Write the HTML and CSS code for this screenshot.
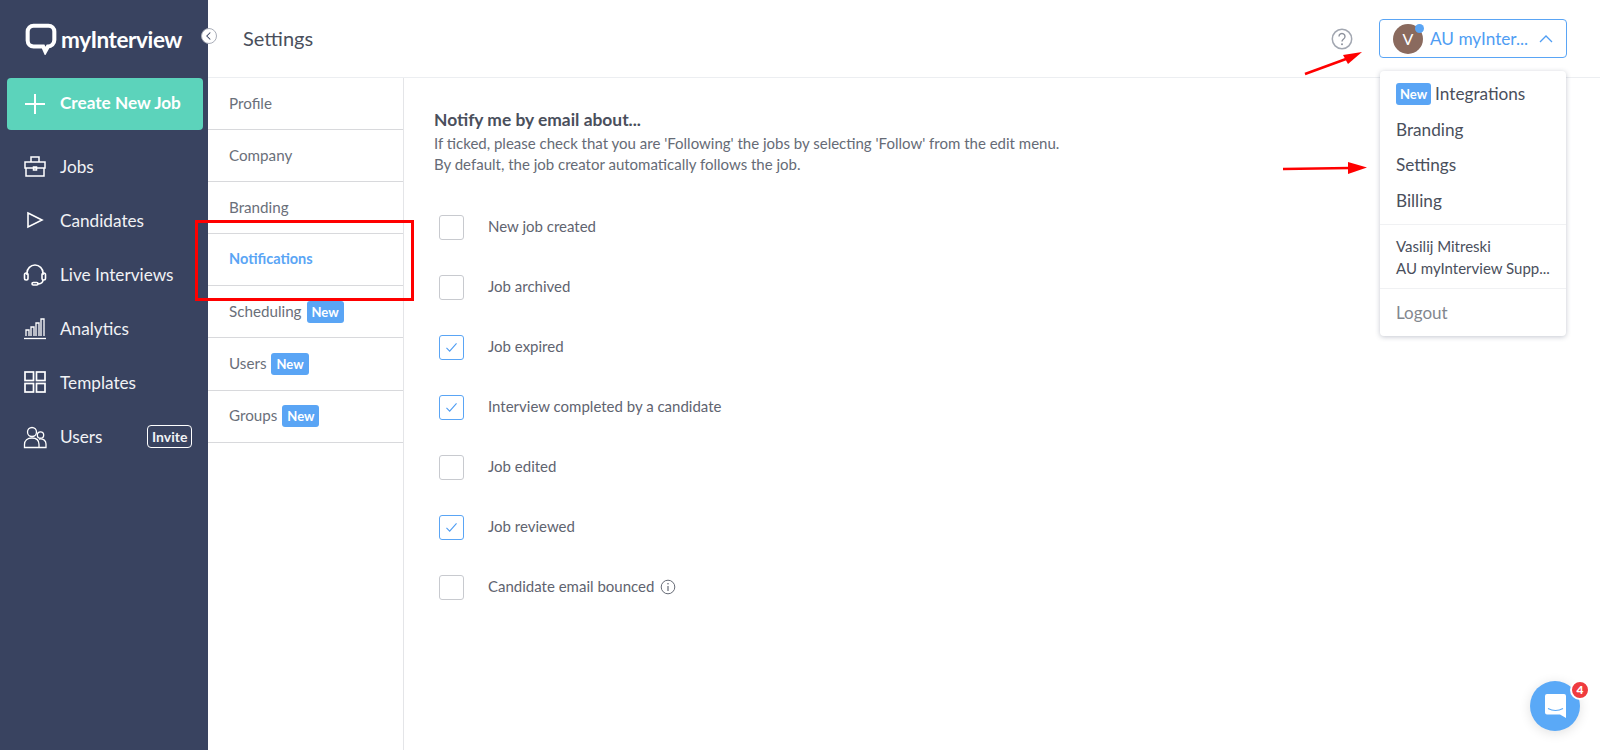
FILE: index.html
```html
<!DOCTYPE html>
<html lang="en">
<head>
    <meta charset="UTF-8">
    <meta name="viewport" content="width=device-width, initial-scale=1.0">
    <link rel="stylesheet" href="styles.css">
    <title>Settings</title>
</head>
<body>
    <div id="app">
        <aside class="sidebar">
            <div class="logo">
                <svg class="logo-mark" viewBox="0 0 30 30" fill="none">
                    <path d="M8 2.5h14a5.5 5.5 0 0 1 5.5 5.5v8a6 6 0 0 1-6 6l-2.5 4.5-2-4.5H8A5.5 5.5 0 0 1 2.5 16.5V8A5.5 5.5 0 0 1 8 2.5z" stroke="#fff" stroke-width="3.8"/>
                </svg>
                <span>myInterview</span>
            </div>
            <span class="collapse">
                <svg viewBox="0 0 16 16" fill="none"><path d="M9.5 4 5.5 8l4 4" stroke="#394360" stroke-width="1.2"/></svg>
            </span>
            <a class="create">
                <svg viewBox="0 0 22 22" fill="none"><path d="M11 1v20M1 11h20" stroke="#fff" stroke-width="2"/></svg>
                <span>Create New Job</span>
            </a>
            <ul class="nav">
                <li>
                    <svg viewBox="0 0 24 24" fill="none" stroke="#fff" stroke-width="1.5"><path d="M2 8h20v6H2zM3 14v8h18v-8M8 8V3h8v5M10.5 13h3v3h-3z"/></svg>
                    Jobs
                </li>
                <li>
                    <svg viewBox="0 0 24 24" fill="none" stroke="#fff" stroke-width="1.6"><path d="M5 5l14 7-14 7z"/></svg>
                    Candidates
                </li>
                <li>
                    <svg viewBox="0 0 24 24" fill="none" stroke="#fff" stroke-width="1.6"><path d="M4 13v-2a8 8 0 0 1 16 0v2"/><rect x="1.5" y="11" width="3.5" height="7" rx="1.7"/><rect x="19" y="11" width="3.5" height="7" rx="1.7"/><path d="M20 18c0 3-3 4-6 4"/><rect x="9" y="20.5" width="6" height="2.5" rx="1.2"/></svg>
                    Live Interviews
                </li>
                <li>
                    <svg viewBox="0 0 24 24" fill="none" stroke="#fff" stroke-width="1.3"><path d="M1 22.5h22"/><path d="M3 20v-6h3v6M8 20v-9h3v9M13 20V7h3v13M18 20V3h3v17"/></svg>
                    Analytics
                </li>
                <li>
                    <svg viewBox="0 0 24 24" fill="none" stroke="#fff" stroke-width="1.7"><rect x="2" y="2" width="8.5" height="8.5"/><rect x="13.5" y="2" width="8.5" height="8.5"/><rect x="2" y="13.5" width="8.5" height="8.5"/><rect x="13.5" y="13.5" width="8.5" height="8.5"/></svg>
                    Templates
                </li>
                <li>
                    <svg viewBox="0 0 24 24" fill="none" stroke="#fff" stroke-width="1.3"><circle cx="9" cy="7" r="4.5"/><circle cx="17.5" cy="10" r="3.2"/><path d="M1.5 22.5v-3c0-4 3-6.5 7.5-6.5s7 2.5 7 6.5v3zM16 14c4-.8 7 1.5 7 5v3.5h-7"/></svg>
                    Users
                    <span class="invite">Invite</span>
                </li>
            </ul>
        </aside>

        <div class="main">
            <header class="topbar">
                <h1>Settings</h1>
                <svg class="help" viewBox="0 0 22 22" fill="none">
                    <circle cx="11" cy="11" r="9.7" stroke="#a2a7b1" stroke-width="1.5"/>
                    <path d="M8 8.5a3 3 0 1 1 4.6 2.5c-1 .7-1.6 1.2-1.6 2.5" stroke="#8d929d" stroke-width="1.4"/>
                    <circle cx="11" cy="16.2" r="1" fill="#8d929d"/>
                </svg>
                <div class="account">
                    <span class="avatar">V</span>
                    <span class="account-name">AU myInter...</span>
                    <svg viewBox="0 0 14 8" fill="none"><path d="M1 7l6-6 6 6" stroke="#4f9df3" stroke-width="1.3"/></svg>
                </div>
            </header>
            <div class="body">
                <ul class="subnav">
                    <li><span>Profile</span></li>
                    <li><span>Company</span></li>
                    <li><span>Branding</span></li>
                    <li class="active"><span>Notifications</span></li>
                    <li><span>Scheduling</span> <b class="tag">New</b></li>
                    <li><span>Users</span> <b class="tag">New</b></li>
                    <li><span>Groups</span> <b class="tag">New</b></li>
                </ul>
                <section class="content">
                    <h2>Notify me by email about...</h2>
                    <p>If ticked, please check that you are 'Following' the jobs by selecting 'Follow' from the edit menu.<br>By default, the job creator automatically follows the job.</p>
                    <ul class="options">
                        <li><span class="check"></span>New job created</li>
                        <li><span class="check"></span>Job archived</li>
                        <li>
                            <span class="check on"><svg viewBox="0 0 14 12" fill="none"><path d="M1.5 6.5 5 10l7.5-8.5" stroke="#4f9df3" stroke-width="1.2"/></svg></span>
                            Job expired
                        </li>
                        <li>
                            <span class="check on"><svg viewBox="0 0 14 12" fill="none"><path d="M1.5 6.5 5 10l7.5-8.5" stroke="#4f9df3" stroke-width="1.2"/></svg></span>
                            Interview completed by a candidate
                        </li>
                        <li><span class="check"></span>Job edited</li>
                        <li>
                            <span class="check on"><svg viewBox="0 0 14 12" fill="none"><path d="M1.5 6.5 5 10l7.5-8.5" stroke="#4f9df3" stroke-width="1.2"/></svg></span>
                            Job reviewed
                        </li>
                        <li>
                            <span class="check"></span>Candidate email bounced
                            <svg class="info" viewBox="0 0 16 16" fill="none"><circle cx="8" cy="8" r="6.8" stroke="#666b76"/><path d="M8 7v5" stroke="#666b76" stroke-width="1.2"/><circle cx="8" cy="4.8" r=".8" fill="#666b76"/></svg>
                        </li>
                    </ul>
                </section>
            </div>
        </div>

        <div class="menu">
            <ul class="menu-links">
                <li><b class="tag">New</b> Integrations</li>
                <li>Branding</li>
                <li>Settings</li>
                <li>Billing</li>
            </ul>
            <div class="menu-user">
                <div>Vasilij Mitreski</div>
                <div>AU myInterview Supp...</div>
            </div>
            <div class="menu-logout">Logout</div>
        </div>

        <div class="redbox"></div>
        <svg class="arrows" viewBox="0 0 1600 750">
            <path d="M1305 74 1346 59" stroke="#f00" stroke-width="2.5"/>
            <path d="M1362 52 1343 55 1348 64z" fill="#f00"/>
            <path d="M1283 169 1350 168" stroke="#f00" stroke-width="2.5"/>
            <path d="M1367 167.5 1348 162 1348 174z" fill="#f00"/>
        </svg>

        <div class="chat">
            <svg viewBox="0 0 21 24"><path d="M2 0h17a2 2 0 0 1 2 2v22l-6-3.5H2a2 2 0 0 1-2-2V2a2 2 0 0 1 2-2z" fill="#fff"/><path d="M3 14.5c4.500 2.400 10.500 2.400 15 0" stroke="#5aa9f7" stroke-width="1.2" fill="none"/></svg>
            <span class="badge">4</span>
        </div>
    </div>
</body>
</html>
```

FILE: styles.css
```css
body,ul,li,h1,h2,p{padding:0;margin:0}
ul,li{list-style:none;}
body{
    font-family:"Lato","Noto Sans",sans-serif;
    color:#5b606c;
    background:#fff;
    overflow:hidden;
}
#app{
    position:relative;
    display:flex;
    width:1600px;
    height:750px;
    overflow:hidden;
}

/* left column */
.sidebar{
    width:208px;
    flex:none;
    background:#394360;
    padding-top:24px;
    box-sizing:border-box;
    color:#f1f2f5;
}
.logo{
    display:flex;
    align-items:center;
    height:30px;
    padding-left:25px;
    gap:4px;
    font-size:22.5px;
    font-weight:700;
    color:#fff;
    letter-spacing:-.4px;
}
.logo-mark{width:32px;height:32px;}
.collapse{
    position:absolute;
    left:201px;
    top:28px;
    width:16px;
    height:16px;
    box-sizing:border-box;
    border:1px solid #a9adb8;
    border-radius:50%;
    background:#fff;
    display:flex;
}
.collapse svg{width:14px;height:14px;}
.create{
    display:flex;
    align-items:center;
    gap:14px;
    height:52px;
    margin:24px 5px 0 7px;
    padding-left:17px;
    border-radius:4px;
    background:#5cd3bb;
    color:#fff;
    font-size:17.2px;
    font-weight:700;
}
.create span{margin-top:-3px;}
.create svg{width:22px;height:22px;}
.nav{margin-top:9px;}
.nav li{
    display:flex;
    align-items:center;
    height:54.1px;
    padding-left:23px;
    font-size:17.2px;
    position:relative;
}
.nav svg{width:24px;height:24px;margin-right:13px;}
.invite{
    position:absolute;
    left:147px;
    top:16px;
    border:1px solid #fff;
    border-radius:4px;
    padding:0 4px;
    height:21px;
    line-height:21px;
    font-size:14px;
    font-weight:700;
}

/* top bar */
.main{flex:1;display:flex;flex-direction:column;min-width:0;}
.topbar{
    display:flex;
    align-items:center;
    height:77px;
    flex:none;
    padding:0 33px 0 35px;
    border-bottom:1px solid #eceef1;
}
.topbar h1{
    font-size:20px;
    font-weight:400;
    color:#4a4f5c;
    flex:1;
    margin-top:-2px;
}
.help{width:22px;height:22px;margin-right:26px;}
.account{
    display:flex;
    align-items:center;
    width:188px;
    height:39px;
    box-sizing:border-box;
    padding:0 13px;
    border:1px solid #5aa5f5;
    border-radius:4px;
    color:#4f9df3;
    font-size:17.2px;
}
.account svg{width:14px;height:8px;margin-left:auto;}
.avatar{
    position:relative;
    width:30px;
    height:30px;
    border-radius:50%;
    background:#8a6a5e;
    color:#fff;
    text-align:center;
    line-height:30px;
    font-size:16px;
    margin-right:7px;
}
.avatar:after{
    content:"";
    position:absolute;
    right:-1px;
    top:0;
    width:9px;
    height:9px;
    border-radius:50%;
    background:#5aa5f5;
}

/* settings body */
.body{flex:1;display:flex;min-height:0;}
.subnav{
    width:195px;
    flex:none;
    border-right:1px solid #e4e5e8;
}
.subnav li{
    display:flex;
    align-items:center;
    gap:5px;
    height:52.1px;
    box-sizing:border-box;
    padding-left:21px;
    border-bottom:1px solid #d8d9dc;
    font-size:15.2px;
    color:#6a6f7a;
}
.subnav li span{margin-top:-2px;}
.subnav .active{color:#5aa5f5;font-weight:700;font-size:14.5px;}
.tag{
    display:inline-block;
    background:#5aa5f5;
    color:#fff;
    border-radius:3px;
    font-size:13px;
    font-weight:700;
    padding:0 5px;
    height:22px;
    line-height:22px;
}
.content{padding:32px 30px;flex:1;}
.content h2{
    font-size:17.4px;
    font-weight:700;
    color:#4a4f5c;
    line-height:20px;
}
.content p{
    font-size:15px;
    line-height:20.5px;
    margin-top:3px;
    color:#666b76;
}
.options{margin-top:22px;}
.options li{
    display:flex;
    align-items:center;
    height:60px;
    padding-left:4.5px;
    font-size:15px;
    color:#5f6470;
}
.check{
    width:25.5px;
    height:25px;
    box-sizing:border-box;
    border:1px solid #c8cacf;
    border-radius:3px;
    margin:3px 24px 0 0;
    display:flex;
    align-items:center;
    justify-content:center;
}
.check.on{border-color:#5aa5f5;}
.check svg{width:13px;height:11px;}
.info{width:16px;height:16px;margin:2px 0 0 6px;}

/* account dropdown */
.menu{
    position:absolute;
    left:1380px;
    top:71px;
    width:186px;
    height:265px;
    background:#fff;
    border-radius:4px;
    box-shadow:0 1px 5px rgba(60,70,100,.3);
    color:#4a4f5c;
}
.menu-links{
    padding:5px 16px 6px;
    font-size:17.2px;
    border-bottom:1px solid #f0f1f3;
}
.menu-links li{height:35.5px;display:flex;align-items:center;gap:4px;}
.menu-links .tag{font-size:13px;padding:0 4px;}
.menu-user{
    padding:10px 16px 9px;
    font-size:15px;
    line-height:22px;
    white-space:nowrap;
    border-bottom:1px solid #f0f1f3;
}
.menu-logout{
    padding:13px 16px;
    font-size:17px;
    color:#83878f;
}

/* annotations on top of the shot */
.redbox{
    position:absolute;
    left:195px;
    top:220px;
    width:219px;
    height:81px;
    box-sizing:border-box;
    border:3px solid #f00;
}
.arrows{
    position:absolute;
    left:0;
    top:0;
    width:1600px;
    height:750px;
    pointer-events:none;
}

/* chat launcher */
.chat{
    position:absolute;
    left:1530px;
    top:681px;
    width:50px;
    height:50px;
    border-radius:50%;
    background:#5aa9f7;
    box-shadow:0 2px 12px rgba(0,0,0,.12);
    display:flex;
    align-items:center;
    justify-content:center;
}
.chat svg{width:21px;height:24px;}
.badge{
    position:absolute;
    right:-10px;
    top:-1px;
    width:20px;
    height:20px;
    box-sizing:border-box;
    border:2px solid #fff;
    border-radius:50%;
    background:#ef3b3f;
    color:#fff;
    font-size:12px;
    font-weight:900;
    line-height:16px;
    text-align:center;
}
```
